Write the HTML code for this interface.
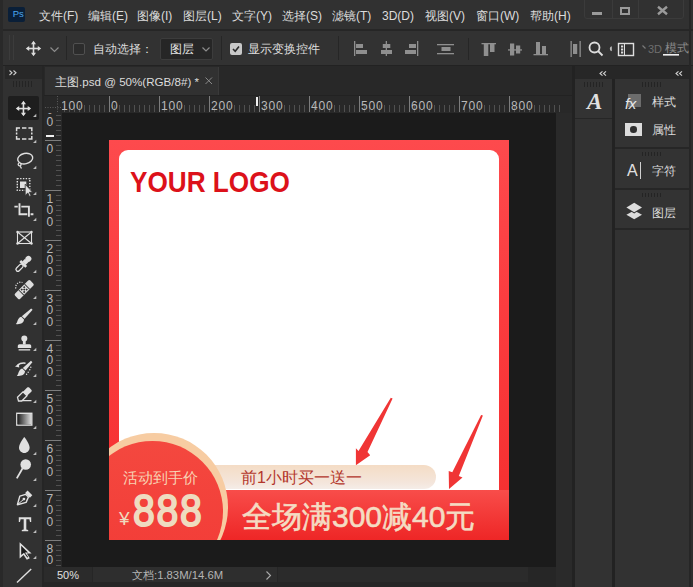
<!DOCTYPE html>
<html><head><meta charset="utf-8">
<style>
*{margin:0;padding:0;box-sizing:border-box}
html,body{width:693px;height:587px;overflow:hidden;background:#323232;font-family:"Liberation Sans",sans-serif;color:#dcdcdc}
.a{position:absolute}
.t{position:absolute;white-space:nowrap;font-size:12px;line-height:14px}
svg{position:absolute;overflow:visible}
.r{position:absolute;top:0.5px;font-size:12px;line-height:14px;color:#b8b8b8;white-space:nowrap;letter-spacing:0.8px;margin-left:-1px}
.rv{position:absolute;left:2.5px;font-size:12px;line-height:11.7px;color:#b8b8b8}
</style></head><body>
<!-- ===== menu bar ===== -->
<div class="a" style="left:0;top:0;width:693px;height:30px;background:#313131"></div>
<div class="a" style="left:0;top:29px;width:693px;height:2px;background:#262626"></div>
<div class="a" style="left:8px;top:7px;width:17px;height:15px;background:#0a1f38;border-radius:2px"></div>
<div class="t" style="left:12.8px;top:8.2px;font-size:9.5px;line-height:11px;letter-spacing:-0.2px;color:#4aa6ee">Ps</div>
<div class="t" style="left:39px;top:9px">文件(F)</div>
<div class="t" style="left:88px;top:9px">编辑(E)</div>
<div class="t" style="left:137px;top:9px">图像(I)</div>
<div class="t" style="left:183px;top:9px">图层(L)</div>
<div class="t" style="left:232px;top:9px">文字(Y)</div>
<div class="t" style="left:282px;top:9px">选择(S)</div>
<div class="t" style="left:332px;top:9px">滤镜(T)</div>
<div class="t" style="left:382px;top:9px">3D(D)</div>
<div class="t" style="left:425px;top:9px">视图(V)</div>
<div class="t" style="left:476px;top:9px">窗口(W)</div>
<div class="t" style="left:530px;top:9px">帮助(H)</div>
<!-- window controls -->
<div class="a" style="left:584px;top:-3px;width:100px;height:22px;border:1px solid #3b3b3b;border-radius:3px"></div>
<div class="a" style="left:612px;top:0;width:1px;height:18px;background:#3b3b3b"></div>
<div class="a" style="left:638px;top:0;width:1px;height:18px;background:#3b3b3b"></div>
<div class="a" style="left:592px;top:12px;width:10px;height:2.6px;background:#9a9a9a"></div>
<div class="a" style="left:620px;top:7px;width:10px;height:8px;border:2px solid #9a9a9a"></div>
<svg style="left:657px;top:6px" width="11" height="9"><path d="M1 0.8L10 8.2M10 0.8L1 8.2" stroke="#9a9a9a" stroke-width="2.4"/></svg>

<!-- ===== options bar ===== -->
<div class="a" style="left:0;top:31px;width:693px;height:34px;background:#323232"></div>
<div class="a" style="left:0;top:65px;width:693px;height:1px;background:#222"></div>
<div class="a" style="left:9px;top:35px;width:1px;height:25px;background:#3c3c3c"></div>
<div class="a" style="left:13px;top:35px;width:1px;height:25px;background:#3c3c3c"></div>
<svg style="left:25px;top:40px" width="17" height="17" viewBox="0 0 17 17"><g fill="#dcdcdc"><rect x="7.7" y="2.5" width="1.6" height="12"/><rect x="2.5" y="7.7" width="12" height="1.6"/><path d="M8.5 0.8L11 4.2H6Z M8.5 16.2L11 12.8H6Z M0.8 8.5L4.2 6V11Z M16.2 8.5L12.8 6V11Z"/></g></svg>
<svg style="left:50px;top:47px" width="9" height="6"><path d="M0.5 0.5L4.5 4.5L8.5 0.5" stroke="#8c8c8c" stroke-width="1.2" fill="none"/></svg>
<div class="a" style="left:66px;top:36px;width:1px;height:24px;background:#262626"></div>
<div class="a" style="left:73px;top:43px;width:12px;height:12px;border:1.5px solid #505050;border-radius:2px;background:#2c2c2c"></div>
<div class="t" style="left:93px;top:42px">自动选择：</div>
<div class="a" style="left:160px;top:38px;width:53px;height:22px;background:#262626;border:1px solid #3c3c3c;border-radius:2px"></div>
<div class="t" style="left:170px;top:42px;color:#e6e6e6">图层</div>
<svg style="left:202px;top:47px" width="8" height="5"><path d="M0.5 0.5L4 4L7.5 0.5" stroke="#8c8c8c" stroke-width="1.2" fill="none"/></svg>
<div class="a" style="left:221px;top:36px;width:1px;height:24px;background:#262626"></div>
<div class="a" style="left:230px;top:43px;width:12px;height:12px;background:#c8c8c8;border-radius:2px"></div>
<svg style="left:232px;top:45px" width="8" height="8"><path d="M1 4L3.2 6.3L7 1.6" stroke="#2a2a2a" stroke-width="1.6" fill="none"/></svg>
<div class="t" style="left:248px;top:42px">显示变换控件</div>
<div class="a" style="left:338px;top:36px;width:1px;height:24px;background:#262626"></div>
<!-- align icons -->
<g></g>
<svg style="left:350px;top:38px" width="340" height="22">
<g fill="#8f8f8f">
<rect x="4" y="3" width="1.3" height="15"/><rect x="6" y="6" width="7" height="4"/><rect x="6" y="12" width="11" height="4"/>
<rect x="35.7" y="3" width="1.3" height="15"/><rect x="32.8" y="6" width="7.5" height="4"/><rect x="31" y="12" width="11" height="4"/>
<rect x="67" y="3" width="1.3" height="15"/><rect x="59" y="6" width="7" height="4"/><rect x="55" y="12" width="11" height="4"/>
<rect x="87" y="6" width="17" height="1.3"/><rect x="87" y="15" width="17" height="1.3"/><rect x="91.5" y="9" width="9" height="4"/>
<rect x="118" y="0" width="1" height="22" fill="#262626"/>
<rect x="131.5" y="5" width="14.5" height="1.3"/><rect x="133.8" y="6" width="4.5" height="12"/><rect x="140" y="6" width="4.5" height="8"/>
<rect x="158" y="11.3" width="14" height="1.3"/><rect x="160" y="5.5" width="4.2" height="12"/><rect x="166" y="7.5" width="4.2" height="8"/>
<rect x="183.5" y="16" width="14.5" height="1.3"/><rect x="186" y="4" width="4" height="12"/><rect x="192" y="8" width="4" height="8"/>
<rect x="220.5" y="3" width="1.3" height="16"/><rect x="229.5" y="3" width="1.3" height="16"/><rect x="223" y="6" width="4.2" height="10"/>
</g>
<g fill="none" stroke="#dedede" stroke-width="1.8"><circle cx="244.5" cy="9.5" r="5"/><path d="M248 13L252.5 17.5"/></g>
<path d="M261.8 8.3A2.5 2.5 0 0 0 261.8 13.2Z" fill="#bbb"/>
<rect x="268.5" y="5.5" width="15" height="12" fill="none" stroke="#dedede" stroke-width="1.4"/>
<g fill="#dedede"><rect x="271" y="7.5" width="2.2" height="2"/><rect x="271" y="10.5" width="2.2" height="2"/><rect x="271" y="13.5" width="2.2" height="2"/></g>
<rect x="274" y="5.5" width="1" height="12" fill="#dedede"/>
<path d="M292.5 7.5L295.5 10.5" stroke="#7a7a7a" stroke-width="1.2"/>
<rect x="313" y="16" width="16" height="1.6" fill="#f0f0f0"/>
</svg>
<div class="t" style="left:648px;top:44px;font-size:11px;line-height:11px;color:#6e6e6e">3D</div>
<div class="t" style="left:665px;top:41px;color:#8a8a8a">模式</div>

<!-- ===== tab bar ===== -->
<div class="a" style="left:44px;top:66px;width:528px;height:29px;background:#282828"></div>
<div class="a" style="left:45px;top:67px;width:174px;height:28px;background:#313131;border-right:1px solid #3a3a3a"></div>
<div class="t" style="left:55px;top:75px;font-size:11.6px">主图.psd @ 50%(RGB/8#) *</div>
<svg style="left:205px;top:77px" width="8" height="8"><path d="M0.5 0.5L7 7M7 0.5L0.5 7" stroke="#8a8a8a" stroke-width="1"/></svg>

<!-- ===== left toolbar ===== -->
<div class="a" style="left:0;top:66px;width:44px;height:521px;background:#313131"></div>
<div class="a" style="left:0;top:0;width:3px;height:587px;background:#292929"></div>
<div class="a" style="left:42px;top:66px;width:2px;height:521px;background:#252525"></div>
<div class="a" style="left:5px;top:66px;width:37px;height:13px;background:#282828"></div>
<svg style="left:9px;top:70px" width="9" height="6"><path d="M0.5 0.5L3 2.8L0.5 5M4.5 0.5L7 2.8L4.5 5" stroke="#d0d0d0" stroke-width="1.1" fill="none"/></svg>
<svg style="left:13px;top:81px" width="22" height="6"><g fill="#242424"><rect x="0" y="0" width="1" height="6"/><rect x="3" y="0" width="1" height="6"/><rect x="6" y="0" width="1" height="6"/><rect x="9" y="0" width="1" height="6"/><rect x="12" y="0" width="1" height="6"/><rect x="15" y="0" width="1" height="6"/><rect x="18" y="0" width="1" height="6"/></g></svg>
<div class="a" style="left:8px;top:96px;width:31px;height:24px;background:#1e1e1e;border-radius:2px"></div>

<!-- ===== rulers ===== -->
<div class="a" style="left:44px;top:95px;width:528px;height:18px;background:#282828"></div>
<div class="a" style="left:44px;top:95px;width:18px;height:472px;background:#282828"></div>
<div class="a" style="left:44px;top:95px;width:528px;height:1px;background:#222"></div>

<!-- ===== canvas ===== -->
<div class="a" style="left:62px;top:113px;width:494px;height:454px;background:#1b1b1b"></div>
<div class="a" style="left:556px;top:113px;width:16px;height:474px;background:#2a2a2a"></div>
<div class="a" style="left:572px;top:66px;width:3px;height:521px;background:#222"></div>

<!-- ===== status bar ===== -->
<div class="a" style="left:44px;top:567px;width:512px;height:20px;background:#262626"></div>
<div class="a" style="left:44px;top:567px;width:48px;height:15px;background:#2b2b2b"></div>
<div class="a" style="left:93px;top:567px;width:184px;height:15px;background:#2e2e2e"></div>
<div class="a" style="left:278px;top:567px;width:250px;height:15px;background:#2b2b2b"></div>
<div class="t" style="left:57px;top:568px;font-size:11px;color:#e0e0e0">50%</div>
<div class="t" style="left:132px;top:568px;font-size:11.3px;color:#b4b4b4">文档:1.83M/14.6M</div>
<svg style="left:266px;top:571px" width="6" height="9"><path d="M0.5 0.5L4.5 4.5L0.5 8.5" stroke="#aaa" stroke-width="1.1" fill="none"/></svg>


<!-- ruler ticks -->
<svg style="left:0;top:0" width="693" height="587"><path d="M57.5 96V112M45 107.5H61" stroke="#5a5a5a" stroke-width="1" stroke-dasharray="1 1.5"/><g fill="#505050"><rect x="64" y="105" width="1" height="7"/><rect x="69" y="105" width="1" height="7"/><rect x="74" y="105" width="1" height="7"/><rect x="79" y="105" width="1" height="7"/><rect x="84" y="105" width="1" height="7"/><rect x="89" y="105" width="1" height="7"/><rect x="94" y="105" width="1" height="7"/><rect x="99" y="105" width="1" height="7"/><rect x="104" y="105" width="1" height="7"/><rect x="109" y="96" width="1" height="16" fill="#7c7c7c"/><rect x="114" y="105" width="1" height="7"/><rect x="119" y="105" width="1" height="7"/><rect x="124" y="105" width="1" height="7"/><rect x="129" y="105" width="1" height="7"/><rect x="134" y="105" width="1" height="7"/><rect x="139" y="105" width="1" height="7"/><rect x="144" y="105" width="1" height="7"/><rect x="149" y="105" width="1" height="7"/><rect x="154" y="105" width="1" height="7"/><rect x="159" y="96" width="1" height="16" fill="#7c7c7c"/><rect x="164" y="105" width="1" height="7"/><rect x="169" y="105" width="1" height="7"/><rect x="174" y="105" width="1" height="7"/><rect x="179" y="105" width="1" height="7"/><rect x="184" y="105" width="1" height="7"/><rect x="189" y="105" width="1" height="7"/><rect x="194" y="105" width="1" height="7"/><rect x="199" y="105" width="1" height="7"/><rect x="204" y="105" width="1" height="7"/><rect x="209" y="96" width="1" height="16" fill="#7c7c7c"/><rect x="214" y="105" width="1" height="7"/><rect x="219" y="105" width="1" height="7"/><rect x="224" y="105" width="1" height="7"/><rect x="229" y="105" width="1" height="7"/><rect x="234" y="105" width="1" height="7"/><rect x="239" y="105" width="1" height="7"/><rect x="244" y="105" width="1" height="7"/><rect x="249" y="105" width="1" height="7"/><rect x="254" y="105" width="1" height="7"/><rect x="259" y="96" width="1" height="16" fill="#7c7c7c"/><rect x="264" y="105" width="1" height="7"/><rect x="269" y="105" width="1" height="7"/><rect x="274" y="105" width="1" height="7"/><rect x="279" y="105" width="1" height="7"/><rect x="284" y="105" width="1" height="7"/><rect x="289" y="105" width="1" height="7"/><rect x="294" y="105" width="1" height="7"/><rect x="299" y="105" width="1" height="7"/><rect x="304" y="105" width="1" height="7"/><rect x="309" y="96" width="1" height="16" fill="#7c7c7c"/><rect x="314" y="105" width="1" height="7"/><rect x="319" y="105" width="1" height="7"/><rect x="324" y="105" width="1" height="7"/><rect x="329" y="105" width="1" height="7"/><rect x="334" y="105" width="1" height="7"/><rect x="339" y="105" width="1" height="7"/><rect x="344" y="105" width="1" height="7"/><rect x="349" y="105" width="1" height="7"/><rect x="354" y="105" width="1" height="7"/><rect x="359" y="96" width="1" height="16" fill="#7c7c7c"/><rect x="364" y="105" width="1" height="7"/><rect x="369" y="105" width="1" height="7"/><rect x="374" y="105" width="1" height="7"/><rect x="379" y="105" width="1" height="7"/><rect x="384" y="105" width="1" height="7"/><rect x="389" y="105" width="1" height="7"/><rect x="394" y="105" width="1" height="7"/><rect x="399" y="105" width="1" height="7"/><rect x="404" y="105" width="1" height="7"/><rect x="409" y="96" width="1" height="16" fill="#7c7c7c"/><rect x="414" y="105" width="1" height="7"/><rect x="419" y="105" width="1" height="7"/><rect x="424" y="105" width="1" height="7"/><rect x="429" y="105" width="1" height="7"/><rect x="434" y="105" width="1" height="7"/><rect x="439" y="105" width="1" height="7"/><rect x="444" y="105" width="1" height="7"/><rect x="449" y="105" width="1" height="7"/><rect x="454" y="105" width="1" height="7"/><rect x="459" y="96" width="1" height="16" fill="#7c7c7c"/><rect x="464" y="105" width="1" height="7"/><rect x="469" y="105" width="1" height="7"/><rect x="474" y="105" width="1" height="7"/><rect x="479" y="105" width="1" height="7"/><rect x="484" y="105" width="1" height="7"/><rect x="489" y="105" width="1" height="7"/><rect x="494" y="105" width="1" height="7"/><rect x="499" y="105" width="1" height="7"/><rect x="504" y="105" width="1" height="7"/><rect x="509" y="96" width="1" height="16" fill="#7c7c7c"/><rect x="514" y="105" width="1" height="7"/><rect x="519" y="105" width="1" height="7"/><rect x="524" y="105" width="1" height="7"/><rect x="529" y="105" width="1" height="7"/><rect x="534" y="105" width="1" height="7"/><rect x="539" y="105" width="1" height="7"/><rect x="544" y="105" width="1" height="7"/><rect x="549" y="105" width="1" height="7"/><rect x="554" y="105" width="1" height="7"/><rect x="559" y="105" width="1" height="7"/><rect x="56" y="115" width="5" height="1"/><rect x="56" y="120" width="5" height="1"/><rect x="56" y="125" width="5" height="1"/><rect x="56" y="130" width="5" height="1"/><rect x="56" y="135" width="5" height="1"/><rect x="45" y="140" width="16" height="1" fill="#7c7c7c"/><rect x="56" y="145" width="5" height="1"/><rect x="56" y="150" width="5" height="1"/><rect x="56" y="155" width="5" height="1"/><rect x="56" y="160" width="5" height="1"/><rect x="56" y="165" width="5" height="1"/><rect x="56" y="170" width="5" height="1"/><rect x="56" y="175" width="5" height="1"/><rect x="56" y="180" width="5" height="1"/><rect x="56" y="185" width="5" height="1"/><rect x="45" y="190" width="16" height="1" fill="#7c7c7c"/><rect x="56" y="195" width="5" height="1"/><rect x="56" y="200" width="5" height="1"/><rect x="56" y="205" width="5" height="1"/><rect x="56" y="210" width="5" height="1"/><rect x="56" y="215" width="5" height="1"/><rect x="56" y="220" width="5" height="1"/><rect x="56" y="225" width="5" height="1"/><rect x="56" y="230" width="5" height="1"/><rect x="56" y="235" width="5" height="1"/><rect x="45" y="240" width="16" height="1" fill="#7c7c7c"/><rect x="56" y="245" width="5" height="1"/><rect x="56" y="250" width="5" height="1"/><rect x="56" y="255" width="5" height="1"/><rect x="56" y="260" width="5" height="1"/><rect x="56" y="265" width="5" height="1"/><rect x="56" y="270" width="5" height="1"/><rect x="56" y="275" width="5" height="1"/><rect x="56" y="280" width="5" height="1"/><rect x="56" y="285" width="5" height="1"/><rect x="45" y="290" width="16" height="1" fill="#7c7c7c"/><rect x="56" y="295" width="5" height="1"/><rect x="56" y="300" width="5" height="1"/><rect x="56" y="305" width="5" height="1"/><rect x="56" y="310" width="5" height="1"/><rect x="56" y="315" width="5" height="1"/><rect x="56" y="320" width="5" height="1"/><rect x="56" y="325" width="5" height="1"/><rect x="56" y="330" width="5" height="1"/><rect x="56" y="335" width="5" height="1"/><rect x="45" y="340" width="16" height="1" fill="#7c7c7c"/><rect x="56" y="345" width="5" height="1"/><rect x="56" y="350" width="5" height="1"/><rect x="56" y="355" width="5" height="1"/><rect x="56" y="360" width="5" height="1"/><rect x="56" y="365" width="5" height="1"/><rect x="56" y="370" width="5" height="1"/><rect x="56" y="375" width="5" height="1"/><rect x="56" y="380" width="5" height="1"/><rect x="56" y="385" width="5" height="1"/><rect x="45" y="390" width="16" height="1" fill="#7c7c7c"/><rect x="56" y="395" width="5" height="1"/><rect x="56" y="400" width="5" height="1"/><rect x="56" y="405" width="5" height="1"/><rect x="56" y="410" width="5" height="1"/><rect x="56" y="415" width="5" height="1"/><rect x="56" y="420" width="5" height="1"/><rect x="56" y="425" width="5" height="1"/><rect x="56" y="430" width="5" height="1"/><rect x="56" y="435" width="5" height="1"/><rect x="45" y="440" width="16" height="1" fill="#7c7c7c"/><rect x="56" y="445" width="5" height="1"/><rect x="56" y="450" width="5" height="1"/><rect x="56" y="455" width="5" height="1"/><rect x="56" y="460" width="5" height="1"/><rect x="56" y="465" width="5" height="1"/><rect x="56" y="470" width="5" height="1"/><rect x="56" y="475" width="5" height="1"/><rect x="56" y="480" width="5" height="1"/><rect x="56" y="485" width="5" height="1"/><rect x="45" y="490" width="16" height="1" fill="#7c7c7c"/><rect x="56" y="495" width="5" height="1"/><rect x="56" y="500" width="5" height="1"/><rect x="56" y="505" width="5" height="1"/><rect x="56" y="510" width="5" height="1"/><rect x="56" y="515" width="5" height="1"/><rect x="56" y="520" width="5" height="1"/><rect x="56" y="525" width="5" height="1"/><rect x="56" y="530" width="5" height="1"/><rect x="56" y="535" width="5" height="1"/><rect x="45" y="540" width="16" height="1" fill="#7c7c7c"/><rect x="56" y="545" width="5" height="1"/><rect x="56" y="550" width="5" height="1"/><rect x="56" y="555" width="5" height="1"/><rect x="56" y="560" width="5" height="1"/><rect x="56" y="565" width="5" height="1"/></g></svg>
<div class="a" style="left:62px;top:98px;width:494px;height:14px;overflow:hidden">
<div class="r" style="left:calc(-62px + 62px)">100</div>
<div class="r" style="left:calc(-62px + 112px)">0</div>
<div class="r" style="left:calc(-62px + 162px)">100</div>
<div class="r" style="left:calc(-62px + 212px)">200</div>
<div class="r" style="left:calc(-62px + 262px)">300</div>
<div class="r" style="left:calc(-62px + 312px)">400</div>
<div class="r" style="left:calc(-62px + 362px)">500</div>
<div class="r" style="left:calc(-62px + 412px)">600</div>
<div class="r" style="left:calc(-62px + 462px)">700</div>
<div class="r" style="left:calc(-62px + 512px)">800</div>
</div>
<div class="a" style="left:44px;top:113px;width:18px;height:453px;overflow:hidden">
<div class="rv" style="top:-19.5px">1<br>0<br>0</div>
<div class="rv" style="top:30.5px">0</div>
<div class="rv" style="top:80.5px">1<br>0<br>0</div>
<div class="rv" style="top:130.5px">2<br>0<br>0</div>
<div class="rv" style="top:180.5px">3<br>0<br>0</div>
<div class="rv" style="top:230.5px">4<br>0<br>0</div>
<div class="rv" style="top:280.5px">5<br>0<br>0</div>
<div class="rv" style="top:330.5px">6<br>0<br>0</div>
<div class="rv" style="top:380.5px">7<br>0<br>0</div>
<div class="rv" style="top:430.5px">8<br>0<br>0</div>
</div>
<!-- toolbar icons -->
<svg style="left:0;top:0" width="44" height="587">
<g fill="#bdbdbd">
<path d="M33 117H36.3V113.7Z M33 143H36.3V139.7Z M33 169H36.3V165.7Z M33 195H36.3V191.7Z M33 221H36.3V217.7Z M33 273H36.3V269.7Z M33 299H36.3V295.7Z M33 325H36.3V321.7Z M33 351H36.3V347.7Z M33 377H36.3V373.7Z M33 403H36.3V399.7Z M33 429H36.3V425.7Z M33 455H36.3V451.7Z M33 481H36.3V477.7Z M33 507H36.3V503.7Z M33 533H36.3V529.7Z M33 559H36.3V555.7Z"/>
</g>
<g fill="#e0e0e0" stroke="none">
<!-- move -->
<rect x="22.65" y="103" width="1.6" height="12"/><rect x="17" y="107.75" width="13" height="1.6"/>
<path d="M23.45 100.8L26 104.2H20.9Z M23.45 116.2L26 112.8H20.9Z M15.8 108.55L19.2 106V111.1Z M31.1 108.55L27.7 106V111.1Z"/>
</g>
<g fill="none" stroke="#e0e0e0" stroke-width="1.6">
<!-- marquee -->
<path d="M16.6 131.2V128H20 M22 128H26.4 M28.4 128H31.8V131.2 M31.8 132.6V134.6 M31.8 136V139H28.4 M26.4 139H22 M20 139H16.6V136 M16.6 134.6V132.6" stroke-width="1.5"/>
<!-- lasso -->
<ellipse cx="25.2" cy="158.6" rx="7.6" ry="5.2" transform="rotate(-12 25.2 158.6)" stroke-width="1.4"/>
<path d="M19.5 162.5C17.5 163.5 17.8 166 20 165.8C21.5 165.6 21.5 164 20.3 163.8M20 165.8L21.5 168.5" stroke-width="1.3"/>
<!-- object select dotted -->
<path d="M17.3 178.6H29.8V190.4H17.3Z" stroke-dasharray="1.4 1.4" stroke-width="1.4"/>
<!-- crop -->
<path d="M14.4 206.6H17.8 M19.5 203.3V214.2H27.3 M21.3 206.6H28.9V216.8 M30.6 214.2H33.4" stroke-width="1.9"/>
<!-- frame -->
<rect x="17.5" y="232" width="14" height="11.5" stroke-width="1.1"/>
<path d="M17.5 232L31.5 243.5M31.5 232L17.5 243.5" stroke-width="1.1"/>
<g fill="#e0e0e0" stroke="none"><circle cx="17.5" cy="232" r="1.2"/><circle cx="31.5" cy="232" r="1.2"/><circle cx="17.5" cy="243.5" r="1.2"/><circle cx="31.5" cy="243.5" r="1.2"/></g>

<!-- history arrow -->
<path d="M17.5 365.3C19.5 363.5 22.5 362.8 25.5 363.2" stroke-width="1.4"/>
<!-- eraser outline -->
<path d="M17.5 397.3L23 391.8L27 395.8L21.8 401H18.5Z M21.5 400.6H31.5" stroke-width="1.3"/>
<!-- gradient border -->
<rect x="16.8" y="413.3" width="15" height="11.8" stroke-width="1.4"/>
<!-- dodge handle -->
<path d="M22.6 468.3L16.8 478.4" stroke-width="1.8"/>
<!-- pen -->
<path d="M25.6 494.3L19.8 496.1L17.4 504.7L26.1 502.4L28.5 496.9Z" stroke-width="1.4" stroke-linejoin="round"/>
<path d="M23.3 499.7L17.9 504.2" stroke-width="1"/>
<path d="M25.2 493L27.6 490.6L32.3 495.3L29.9 497.7Z" fill="#e0e0e0" stroke="none"/>
<circle cx="23.9" cy="499.1" r="1.4" fill="#e0e0e0" stroke="none"/>
<!-- line -->
<path d="M17 582.5L31.2 569" stroke-width="1.4"/>
</g>
<g fill="#e0e0e0">
<!-- object select inner -->
<rect x="20" y="181.5" width="6.3" height="6.5"/>
<path d="M25.2 184.2L25.2 195.5L27.8 193L29.5 196.5L31 195.8L29.3 192.3L32.6 192.3Z" stroke="#313131" stroke-width="0.8"/>


<!-- brush -->
<path d="M31.2 308.4L32.6 309.8L24.6 318.8L21.8 316.2Z"/>
<path d="M21.3 316.8L24 319.5C24 323 20 324.8 15.8 324C18 322.6 17 318 21.3 316.8Z"/>
<!-- stamp -->
<circle cx="24.3" cy="338.5" r="3"/><rect x="22.9" y="339.5" width="2.8" height="5"/>
<path d="M17.8 348V346C17.8 345 18.5 344.3 19.5 344.3H29.5C30.5 344.3 31.2 345 31.2 346V348Z"/>
<rect x="18.6" y="349.2" width="11.6" height="1.3"/>
<!-- history brush -->
<path d="M15 366.6L19 363.6L19.2 367.6Z"/><circle cx="30.8" cy="367.2" r="0.7"/><circle cx="29.8" cy="369.8" r="0.7"/><circle cx="28.2" cy="372.2" r="0.7"/><circle cx="26.6" cy="374.3" r="0.7"/>
<path d="M31 360.8L32.4 362.2L25.6 370.6L22.8 368Z"/>
<path d="M22.3 368.6L25 371.3C25 374.8 21 376.6 16.8 375.8C19 374.4 18 369.8 22.3 368.6Z"/>
<!-- eraser top block -->
<path d="M23 391.8L27.2 387.6C27.8 387 28.6 387 29.2 387.6L31.3 389.7C31.9 390.3 31.9 391.1 31.3 391.7L27 395.8Z"/>
<!-- blur drop -->
<path d="M24.3 437C24.3 437 19 443.8 19 447.5C19 450.6 21.4 453 24.3 453C27.2 453 29.6 450.6 29.6 447.5C29.6 443.8 24.3 437 24.3 437Z"/>
<!-- dodge head -->
<circle cx="25.7" cy="464.5" r="5.3"/>
<!-- Type T -->
<path d="M18.8 517.2H31.2V522H30L29.4 519.2H26.3V529.5L28.2 530V531.2H21.8V530L23.7 529.5V519.2H20.6L20 522H18.8Z"/>
<!-- path select arrow -->
<path d="M19.6 542.3V558.6L23.6 555.1L26.8 559.8L29.8 558.2L26.8 553.6H31.6Z"/>
</g>
<!-- path arrow inner dark -->
<path d="M21.2 545.8V555L24 552.7L27.3 557.6L28.1 557.1L24.9 552.4H28Z" fill="#1a1a1a"/>
<!-- healing dots -->



<!-- eyedropper -->
<g transform="translate(23.6 263.6) rotate(45)">
<rect x="-1.9" y="1.5" width="3.8" height="8.5" rx="1.9" fill="none" stroke="#e0e0e0" stroke-width="1.3"/>
<rect x="-4.2" y="-0.8" width="8.4" height="2.6" fill="#e0e0e0"/>
<rect x="-2.4" y="-4.5" width="4.8" height="4" fill="#e0e0e0"/>
<rect x="-2.9" y="-9.8" width="5.8" height="6" rx="2.9" fill="#e0e0e0"/>
</g>
<!-- healing -->
<g transform="translate(24.2 289.6) rotate(45)">
<rect x="-3.6" y="-10.8" width="7.2" height="21.6" rx="1.6" fill="#dcdcdc"/>
<rect x="-3.6" y="-4.6" width="7.2" height="0.9" fill="#313131"/>
<rect x="-3.6" y="3.7" width="7.2" height="0.9" fill="#313131"/>
<g fill="#313131"><rect x="-2.6" y="-2.6" width="1.7" height="1.7"/><rect x="0.9" y="-2.6" width="1.7" height="1.7"/><rect x="-0.85" y="-0.85" width="1.7" height="1.7"/><rect x="-2.6" y="0.9" width="1.7" height="1.7"/><rect x="0.9" y="0.9" width="1.7" height="1.7"/></g>
</g>
<path d="M15.8 288.5C15 284.5 18.5 281.3 22.5 282.5" stroke="#d8d8d8" stroke-width="1.3" stroke-dasharray="1.2 1.3" fill="none"/>
<!-- gradient fill -->
<defs><linearGradient id="gg" x1="0" y1="0" x2="1" y2="0"><stop offset="0" stop-color="#1e1e1e"/><stop offset="1" stop-color="#dadada"/></linearGradient></defs>
<rect x="17.5" y="414" width="13.6" height="10.4" fill="url(#gg)"/>
</svg>
<div class="a" style="left:256px;top:97px;width:1.5px;height:9px;background:#f0f0f0"></div>
<div class="a" style="left:46px;top:135px;width:8px;height:1.5px;background:#f0f0f0"></div>
<!-- ===== right panels ===== -->
<div class="a" style="left:575px;top:66px;width:38px;height:521px;background:#323232"></div>
<div class="a" style="left:612px;top:66px;width:3px;height:521px;background:#222"></div>
<div class="a" style="left:615px;top:66px;width:74px;height:521px;background:#323232"></div>
<div class="a" style="left:689px;top:0;width:1.5px;height:587px;background:#262626"></div><div class="a" style="left:690.5px;top:66px;width:2.5px;height:521px;background:#2e2e2e"></div>
<div class="a" style="left:575px;top:66px;width:114px;height:13px;background:#272727"></div>
<svg style="left:599px;top:71px" width="8" height="5"><path d="M3.5 0.3L1 2.5L3.5 4.7M7 0.3L4.5 2.5L7 4.7" stroke="#d0d0d0" stroke-width="1.1" fill="none"/></svg>
<svg style="left:675px;top:71px" width="8" height="5"><path d="M3.5 0.3L1 2.5L3.5 4.7M7 0.3L4.5 2.5L7 4.7" stroke="#d0d0d0" stroke-width="1.1" fill="none"/></svg>
<!-- narrow col box -->
<div class="a" style="left:575px;top:79px;width:37px;height:40px;background:#333;border-bottom:1px solid #262626"></div>
<svg style="left:584px;top:82px" width="20" height="5"><g fill="#242424"><rect x="0" width="1" height="5"/><rect x="3" width="1" height="5"/><rect x="6" width="1" height="5"/><rect x="9" width="1" height="5"/><rect x="12" width="1" height="5"/><rect x="15" width="1" height="5"/><rect x="18" width="1" height="5"/></g></svg>
<div class="t" style="left:587px;top:90px;font-family:'Liberation Serif',serif;font-style:italic;font-weight:bold;font-size:23px;line-height:23px;color:#e0e0e0">A</div>
<!-- wide col panels -->
<div class="a" style="left:615px;top:79px;width:74px;height:68px;background:#333"></div>
<div class="a" style="left:615px;top:147px;width:74px;height:2px;background:#262626"></div>
<div class="a" style="left:615px;top:149px;width:74px;height:39px;background:#333"></div>
<div class="a" style="left:615px;top:188px;width:74px;height:2px;background:#262626"></div>
<div class="a" style="left:615px;top:190px;width:74px;height:38px;background:#333"></div>
<div class="a" style="left:615px;top:228px;width:74px;height:2px;background:#262626"></div>
<svg style="left:642px;top:82px" width="21" height="5"><g fill="#242424"><rect x="0" width="1" height="5"/><rect x="3" width="1" height="5"/><rect x="6" width="1" height="5"/><rect x="9" width="1" height="5"/><rect x="12" width="1" height="5"/><rect x="15" width="1" height="5"/><rect x="18" width="1" height="5"/></g></svg>
<svg style="left:642px;top:152px" width="21" height="4"><g fill="#242424"><rect x="0" width="1" height="4"/><rect x="3" width="1" height="4"/><rect x="6" width="1" height="4"/><rect x="9" width="1" height="4"/><rect x="12" width="1" height="4"/><rect x="15" width="1" height="4"/><rect x="18" width="1" height="4"/></g></svg>
<svg style="left:642px;top:193px" width="21" height="4"><g fill="#242424"><rect x="0" width="1" height="4"/><rect x="3" width="1" height="4"/><rect x="6" width="1" height="4"/><rect x="9" width="1" height="4"/><rect x="12" width="1" height="4"/><rect x="15" width="1" height="4"/><rect x="18" width="1" height="4"/></g></svg>
<div class="a" style="left:628px;top:94px;width:13px;height:13px;background:#6c6c6c"></div>
<div class="t" style="left:625px;top:96px;font-style:italic;font-size:15px;line-height:15px;letter-spacing:-0.5px;color:#e8e8e8">fx</div>
<div class="t" style="left:652px;top:95px">样式</div>
<div class="a" style="left:625px;top:123px;width:17px;height:13px;background:#dcdcdc"></div>
<div class="a" style="left:630px;top:126.3px;width:6.6px;height:6.6px;background:#2e2e2e;border-radius:50%"></div>
<div class="t" style="left:652px;top:123px">属性</div>
<div class="t" style="left:627px;top:163px;font-size:16px;line-height:16px;color:#e0e0e0">A</div>
<div class="a" style="left:640px;top:162px;width:1px;height:17px;background:#d0d0d0"></div>
<div class="t" style="left:652px;top:164px">字符</div>
<svg style="left:626px;top:202px" width="17" height="18"><path d="M8.2 8.6L16 12.8L8.2 17.3L0.4 12.8Z" fill="#dcdcdc"/><path d="M8.2 -0.3L17.4 5.5L8.2 11.6L-1 5.5Z" fill="#333"/><path d="M8.2 0.8L16 5.5L8.2 10.3L0.4 5.5Z" fill="#dcdcdc"/></svg>
<div class="t" style="left:652px;top:206px">图层</div>
<!-- ===== image ===== -->
<div class="a" style="left:109px;top:140px;width:400px;height:400px;overflow:hidden;background:linear-gradient(#fd4a4d,#fb3b3e 45%,#f42e2e)">
  <div class="a" style="left:10px;top:10px;width:380px;height:360px;background:#fff;border-radius:9px"></div>
  <div class="t" style="left:21px;top:27px;font-weight:bold;font-size:30px;line-height:30px;color:#dc111a;transform:scaleX(0.872);transform-origin:0 0">YOUR LOGO</div>
  <!-- arrows -->
  <svg style="left:0;top:0" width="400" height="400"><g fill="#f03535">
    <path d="M281.8 257.8L283.6 258.6L258.5 312L261.2 315.3L246.9 325.3L246.9 308.3L249.5 311Z"/>
    <path d="M372.1 275L373.9 275.4L349.8 336L353.5 337.4L340 349L339.7 330.9L343.3 332.3Z"/>
  </g></svg>
  <!-- pill -->
  <div class="a" style="left:60px;top:324.5px;width:267px;height:24px;border-radius:12px;background:linear-gradient(#f4dcc5,#f4e6dc 75%,#f5ede8)"></div>
  <!-- bottom bar -->
  <div class="a" style="left:0;top:350px;width:400px;height:50px;background:linear-gradient(#f84d4a,#ee2626)"></div>
  <!-- circle -->
  <div class="a" style="left:-28.8px;top:293.2px;width:147.6px;height:147.6px;border-radius:50%;background:#f7cca2"></div>
  <div class="a" style="left:-27.5px;top:300.5px;width:141px;height:141px;border-radius:50%;background:linear-gradient(#f4483f,#f23a36)"></div>
  <div class="t" style="left:14px;top:329.5px;font-size:15px;line-height:16px;color:#f8d3b4">活动到手价</div>
  <div class="t" style="left:10px;top:369px;font-size:19px;line-height:20px;color:#f0d9be">¥</div>
  <div class="t" style="left:23.5px;top:348px;font-size:44px;line-height:46px;color:#eedcc0;-webkit-text-stroke:1.9px #eedcc0;letter-spacing:2px;transform:scaleX(0.89);transform-origin:0 0">888</div>
  <div class="t" style="left:132px;top:329px;font-size:16px;line-height:17px;font-weight:500;color:#b3362c">前1小时买一送一</div>
  <div class="t" style="left:133px;top:361px;font-size:30px;line-height:32px;font-weight:500;color:#f4dcc3;-webkit-text-stroke:0.6px #f4dcc3">全场满300减40元</div>
</div>
</body></html>
